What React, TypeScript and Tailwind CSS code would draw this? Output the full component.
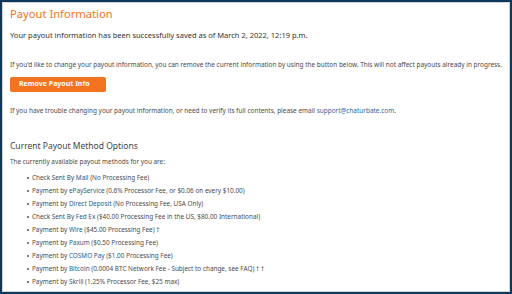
export default function App() {
  const methods: { pre: string; name: string; rest: string }[] = [
    { pre: "Check Sent By ", name: "Mail", rest: " (No Processing Fee)" },
    { pre: "Payment by ", name: "ePayService", rest: " (0.6% Processor Fee, or $0.06 on every $10.00)" },
    { pre: "Payment by ", name: "Direct Deposit", rest: " (No Processing Fee, USA Only)" },
    { pre: "Check Sent By ", name: "Fed Ex", rest: " ($40.00 Processing Fee in the US, $80.00 International)" },
    { pre: "Payment by ", name: "Wire", rest: " ($45.00 Processing Fee) †" },
    { pre: "Payment by ", name: "Paxum", rest: " ($0.50 Processing Fee)" },
    { pre: "Payment by ", name: "COSMO Pay", rest: " ($1.00 Processing Fee)" },
    { pre: "Payment by ", name: "Bitcoin", rest: " (0.0004 BTC Network Fee - Subject to change, see FAQ) † †" },
    { pre: "Payment by ", name: "Skrill", rest: " (1.25% Processor Fee, $25 max)" },
  ];

  return (
    <div className="w-[512px] h-[294px] border-2 border-[#0d3a5c] bg-white font-['Noto_Sans',sans-serif]">
      <div className="h-full border border-[#d4d4d4] pl-[7px] text-[#4a4a4a]">
        <h1 className="mt-[3px] leading-[16px] text-[11.2px] text-[#f47321]">Payout Information</h1>
        <p className="mt-[6px] leading-[14px] text-[7.5px] text-[#333]">
          Your payout information has been successfully saved as of March 2, 2022, 12:19 p.m.
        </p>
        <p className="mt-[17px] leading-[12px] text-[6.45px]">
          If you'd like to change your payout information, you can remove the current information by using the button below. This will not affect payouts already in progress.
        </p>
        <button className="mt-[6px] flex h-[15px] w-[96px] items-center rounded-[2px] bg-[#f47321] pl-[9px] text-[7px] font-bold text-white">
          Remove Payout Info
        </button>
        <p className="mt-[13px] leading-[12px] text-[6.45px]">
          If you have trouble changing your payout information, or need to verify its full contents, please email{" "}
          <a className="text-[#1f6aa5]">support@chaturbate.com</a>.
        </p>
        <h2 className="mt-[22px] leading-[14px] text-[8.5px] text-[#444]">Current Payout Method Options</h2>
        <p className="mt-[3px] leading-[12px] text-[6.4px]">The currently available payout methods for you are:</p>
        <ul className="mt-[3px] pl-[17px] text-[6.4px] leading-[13px]">
          {methods.map((m) => (
            <li key={m.name} className="flex items-center gap-[3px]">
              <span className="h-[2px] w-[2px] rounded-full bg-[#555]" />
              <span>
                {m.pre}
                <span className="text-[#2b5a82]">{m.name}</span>
                {m.rest}
              </span>
            </li>
          ))}
        </ul>
      </div>
    </div>
  );
}
